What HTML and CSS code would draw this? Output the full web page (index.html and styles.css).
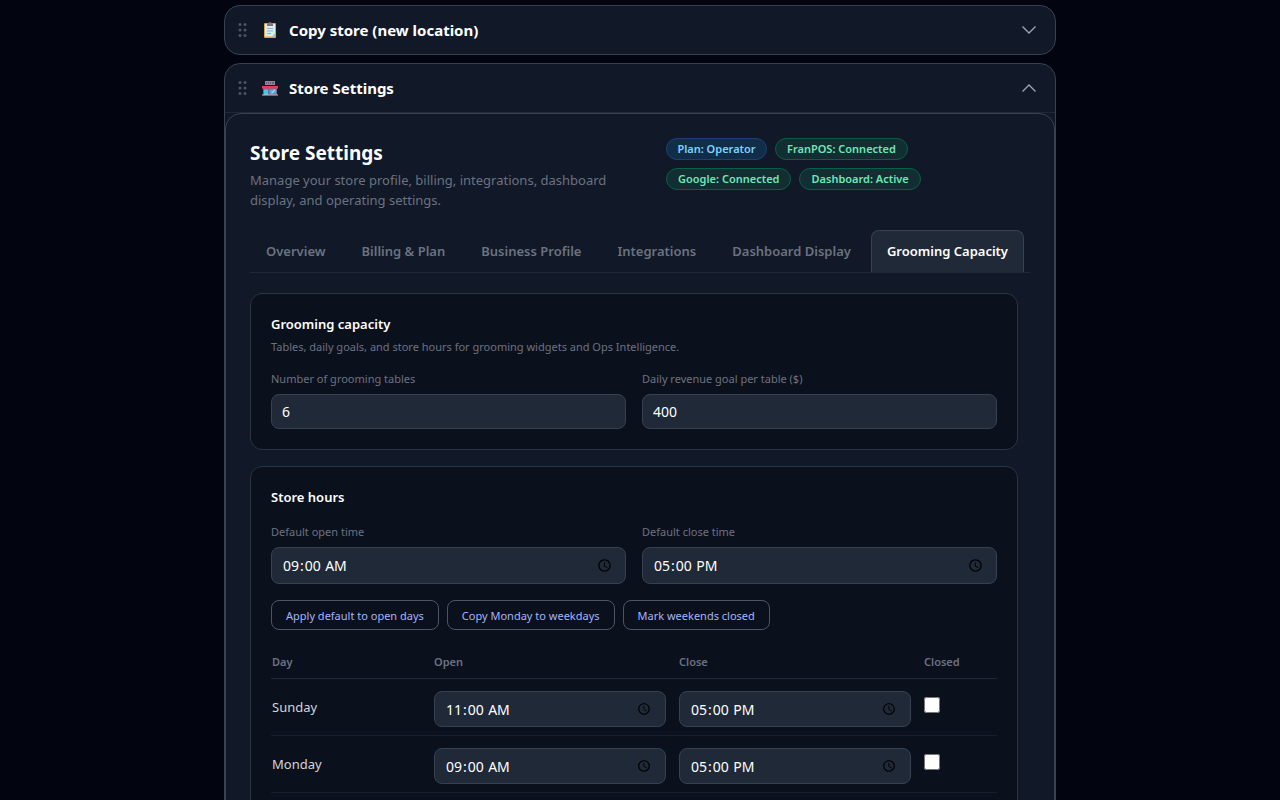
FILE: index.html
```html
<!DOCTYPE html>
<html lang="en">

<head>
    <meta charset="UTF-8">
    <meta name="viewport" content="width=device-width, initial-scale=1.0">
    <title>Store Settings</title>
    <link rel="stylesheet" href="styles.css">
</head>

<body>
    <main class="page">
        <section class="accordion">
            <button type="button" class="accordion-header" aria-expanded="false">
                <svg class="grip" viewBox="0 0 10 16" width="10" height="16" aria-hidden="true">
                    <circle cx="3" cy="2.5" r="1.5" /><circle cx="8" cy="2.5" r="1.5" />
                    <circle cx="3" cy="8" r="1.5" /><circle cx="8" cy="8" r="1.5" />
                    <circle cx="3" cy="13.5" r="1.5" /><circle cx="8" cy="13.5" r="1.5" />
                </svg>
                <svg class="emoji" viewBox="0 0 16 16" width="16" height="16" aria-hidden="true">
                    <rect x="2" y="1" width="12" height="15" rx="1" fill="#d9a441" />
                    <rect x="3" y="2" width="10" height="12.5" fill="#d3f0fa" />
                    <path d="M10 14.5h3v-3z" fill="#8fb8d8" />
                    <path d="M5 1.5h1.500a1.500 1.500 0 0 1 3 0H11V4H5z" fill="#8a7078" />
                    <path d="M5 6.500h6M5 9h6M5 11.500h4" stroke="#a3a9c4" fill="none" />
                </svg>
                <span class="accordion-title">Copy store (new location)</span>
                <svg class="chevron" viewBox="0 0 16 16" width="16" height="16" aria-hidden="true">
                    <path d="M1.500 4.500L8 11l6.500-6.500" />
                </svg>
            </button>
        </section>

        <section class="accordion">
            <button type="button" class="accordion-header open" aria-expanded="true">
                <svg class="grip" viewBox="0 0 10 16" width="10" height="16" aria-hidden="true">
                    <circle cx="3" cy="2.5" r="1.5" /><circle cx="8" cy="2.5" r="1.5" />
                    <circle cx="3" cy="8" r="1.5" /><circle cx="8" cy="8" r="1.5" />
                    <circle cx="3" cy="13.5" r="1.5" /><circle cx="8" cy="13.5" r="1.5" />
                </svg>
                <svg class="emoji" viewBox="0 0 16 16" width="16" height="16" aria-hidden="true">
                    <rect x="3" y="1" width="10" height="4" fill="#8e879c" />
                    <path d="M4 3h1M6 3h1M8 3h1M10 3h2" stroke="#3f3a4a" />
                    <rect x="1" y="8" width="14" height="7" fill="#7a6a80" />
                    <rect x="0" y="6" width="16" height="2.500" fill="#ea3a5c" />
                    <rect x="2" y="9.500" width="4" height="5.500" fill="#4cc2f1" />
                    <rect x="7.500" y="9.500" width="6.500" height="4" fill="#5aa9e6" />
                    <path d="M9 13.500l3-4h1.500l-3 4z" fill="#a5dcf7" />
                    <rect x="0" y="14.500" width="16" height="1" fill="#b9c4d2" />
                </svg>
                <span class="accordion-title">Store Settings</span>
                <svg class="chevron" viewBox="0 0 16 16" width="16" height="16" aria-hidden="true">
                    <path d="M1.500 11.500L8 5l6.500 6.500" />
                </svg>
            </button>

            <div class="panel">
                <header class="panel-header">
                    <div>
                        <h1 class="panel-title">Store Settings</h1>
                        <p class="panel-text">Manage your store profile, billing, integrations, dashboard display, and operating settings.</p>
                    </div>
                    <div class="badges">
                        <span class="badge plan">Plan: Operator</span>
                        <span class="badge">FranPOS: Connected</span>
                        <span class="badge">Google: Connected</span>
                        <span class="badge">Dashboard: Active</span>
                    </div>
                </header>

                <nav class="tabs" role="tablist">
                    <button type="button" class="tab" role="tab">Overview</button>
                    <button type="button" class="tab" role="tab">Billing &amp; Plan</button>
                    <button type="button" class="tab" role="tab">Business Profile</button>
                    <button type="button" class="tab" role="tab">Integrations</button>
                    <button type="button" class="tab" role="tab">Dashboard Display</button>
                    <button type="button" class="tab active" role="tab" aria-selected="true">Grooming Capacity</button>
                </nav>

                <section class="card">
                    <h2 class="card-title">Grooming capacity</h2>
                    <p class="card-text">Tables, daily goals, and store hours for grooming widgets and Ops Intelligence.</p>
                    <div class="fields">
                        <div class="field">
                            <label for="tables">Number of grooming tables</label>
                            <input type="number" class="input" id="tables" value="6">
                        </div>
                        <div class="field">
                            <label for="goal">Daily revenue goal per table ($)</label>
                            <input type="number" class="input" id="goal" value="400">
                        </div>
                    </div>
                </section>

                <section class="card">
                    <h2 class="card-title">Store hours</h2>
                    <div class="fields">
                        <div class="field">
                            <label for="defaultOpen">Default open time</label>
                            <input type="time" class="input time" id="defaultOpen" value="09:00">
                        </div>
                        <div class="field">
                            <label for="defaultClose">Default close time</label>
                            <input type="time" class="input time" id="defaultClose" value="17:00">
                        </div>
                    </div>
                    <div class="actions">
                        <button type="button" class="btn">Apply default to open days</button>
                        <button type="button" class="btn">Copy Monday to weekdays</button>
                        <button type="button" class="btn">Mark weekends closed</button>
                    </div>
                    <table class="hours">
                        <thead>
                            <tr>
                                <th class="col-day" id="day">Day</th>
                                <th id="open">Open</th>
                                <th id="close">Close</th>
                                <th class="col-closed" id="closed">Closed</th>
                            </tr>
                        </thead>
                        <tbody>
                            <tr>
                                <td id="sun">Sunday</td>
                                <td class="time-cell"><input type="time" class="input" value="11:00" aria-labelledby="sun open"></td>
                                <td class="time-cell"><input type="time" class="input" value="17:00" aria-labelledby="sun close"></td>
                                <td class="closed-cell"><input type="checkbox" class="check" aria-labelledby="sun closed"></td>
                            </tr>
                            <tr>
                                <td id="mon">Monday</td>
                                <td class="time-cell"><input type="time" class="input" value="09:00" aria-labelledby="mon open"></td>
                                <td class="time-cell"><input type="time" class="input" value="17:00" aria-labelledby="mon close"></td>
                                <td class="closed-cell"><input type="checkbox" class="check" aria-labelledby="mon closed"></td>
                            </tr>
                        </tbody>
                    </table>
                </section>
            </div>
        </section>
    </main>
</body>

</html>
```
FILE: styles.css
```css
* {
    box-sizing: border-box;
    margin: 0;
    padding: 0;
}

body {
    background-color: #020510;
    color: #ffffff;
    font-family: "Segoe UI", "Noto Sans", "Open Sans", sans-serif;
    font-size: 13px;
    line-height: 20px;
}

button,
input {
    font-family: inherit;
    font-size: inherit;
    color: inherit;
}

button {
    background: none;
    border: none;
    cursor: pointer;
}

.page {
    max-width: 832px;
    margin: 0 auto;
    padding: 5px 0;
    display: flex;
    flex-direction: column;
    gap: 8px;
}

/* accordion */
.accordion {
    border: 1px solid #374151;
    border-radius: 16px;
    background-color: #111827;
}

.accordion-header {
    display: flex;
    align-items: center;
    width: 100%;
    height: 48px;
    padding: 0 18px 0 12px;
    text-align: left;
}

.accordion-header.open {
    height: 49px;
    border-bottom: 1px solid #1f2937;
}

.grip {
    fill: #4b5563;
    margin-right: 15px;
}

.emoji {
    margin-right: 11px;
}

.accordion-title {
    flex: 1;
    font-size: 15px;
    font-weight: 700;
}

.chevron {
    fill: none;
    stroke: #9ca3af;
    stroke-width: 1.4;
}

/* settings panel */
.panel {
    border: 1px solid #374151;
    border-radius: 16px;
    padding: 24px;
}

.panel-header {
    display: grid;
    grid-template-columns: minmax(0, 400px) 1fr;
    gap: 16px;
    margin-bottom: 20px;
}

.panel-title {
    font-size: 19px;
    line-height: 30px;
    margin-bottom: 2px;
}

.panel-text {
    color: #6b7280;
    max-width: 384px;
}

.badges {
    display: flex;
    flex-wrap: wrap;
    align-content: flex-start;
    gap: 8px;
    max-width: 300px;
}

.badge {
    padding: 2px 10px;
    border: 1px solid #065f46;
    border-radius: 11px;
    background-color: #122e33;
    color: #6ee7b7;
    font-size: 11px;
    font-weight: 600;
    line-height: 16px;
    min-width: 101px;
    text-align: center;
}

.badge:not(.plan) {
    padding: 2px 11px;
}

.badge.plan {
    border-color: #1e4079;
    background-color: #112e49;
    color: #7dd3fc;
}

/* tabs */
.tabs {
    display: flex;
    gap: 4px;
    height: 43px;
    border-bottom: 1px solid #1f2937;
    margin-bottom: 20px;
}

.tab {
    padding: 0 15px 2px;
    border: 1px solid transparent;
    border-bottom: none;
    border-radius: 8px 8px 0 0;
    color: #6b7280;
    font-weight: 600;
    white-space: nowrap;
}

.tab.active {
    background-color: #1f2937;
    border-color: #374151;
    color: #ffffff;
}

/* cards */
.card {
    max-width: 768px;
    padding: 20px;
    border: 1px solid #2b3443;
    border-radius: 12px;
    background-color: #0b101d;
}

.card + .card {
    margin-top: 16px;
}

.card-title {
    font-size: 13px;
    font-weight: 600;
    line-height: 21px;
}

.card-text {
    margin-top: 4px;
    color: #6b7280;
    font-size: 11px;
    line-height: 16px;
}

.fields {
    display: grid;
    grid-template-columns: 1fr 1fr;
    gap: 16px;
    margin-top: 16px;
}

.field label {
    display: block;
    margin-bottom: 7px;
    color: #6b7280;
    font-size: 11px;
    line-height: 16px;
}

.input {
    display: block;
    width: 100%;
    height: 35px;
    padding: 0 10px;
    border: 1px solid #374151;
    border-radius: 8px;
    background-color: #1f2937;
    font-size: 14px;
}

.input.time {
    height: 37px;
}

.actions {
    display: flex;
    gap: 8px;
    margin: 16px 0;
}

.btn {
    height: 30px;
    padding: 0 14px;
    border: 1px solid #4b5563;
    border-radius: 8px;
    color: #a5b4fc;
    font-size: 11px;
}

/* weekly hours */
.hours {
    width: 100%;
    table-layout: fixed;
    border-collapse: collapse;
}

.hours th {
    padding: 8px 12px 8px 1px;
    border-bottom: 1px solid #1f2937;
    color: #6b7280;
    font-size: 11px;
    font-weight: 600;
    line-height: 16px;
    text-align: left;
}

.hours td {
    padding: 10px 12px 10px 1px;
    border-bottom: 1px solid #161e2d;
    color: #d1d5db;
}

.hours .time-cell {
    padding-top: 12px;
    padding-bottom: 8px;
}

.hours .closed-cell {
    padding-top: 8px;
    padding-bottom: 12px;
}

.hours .input {
    height: 36px;
    color: #ffffff;
}

.col-day {
    width: 162px;
}

.col-closed {
    width: 74px;
}

.check {
    display: block;
    width: 16px;
    height: 16px;
}
```
